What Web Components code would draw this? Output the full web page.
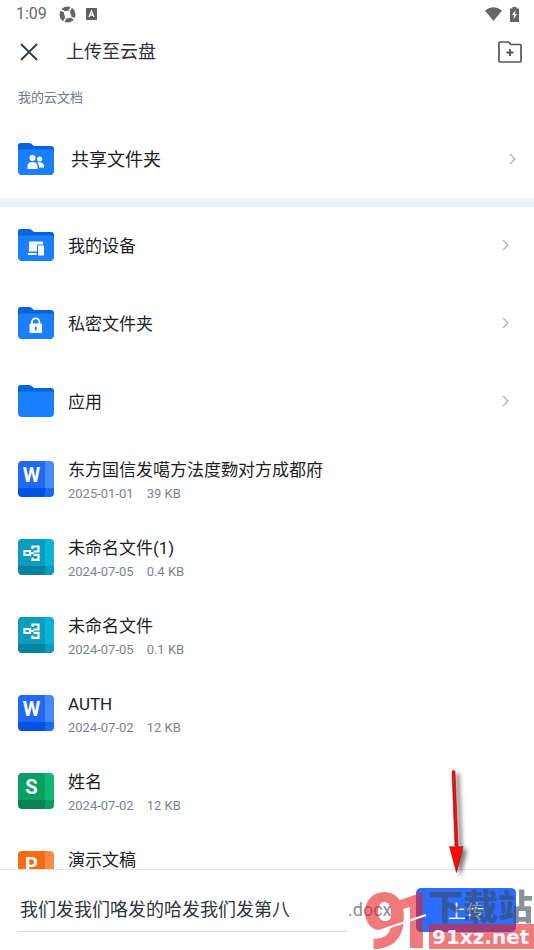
<!DOCTYPE html>
<html lang="zh-CN">
<head>
<meta charset="utf-8">
<meta name="viewport" content="width=device-width, initial-scale=1">
<title>上传至云盘</title>
<style>
html, body { margin: 0; height: 100%; }
body { background: #fff; color: #1c1e22; font-family: Roboto, "Noto Sans CJK SC", sans-serif; }
</style>
</head>
<body>
<upload-screen>
  <status-bar slot="top">1:09</status-bar>
  <title-bar slot="top">上传至云盘</title-bar>
  <section-label>我的云文档</section-label>
  <folder-row emblem="people" featured>共享文件夹</folder-row>
  <section-divider></section-divider>
  <folder-row emblem="devices">我的设备</folder-row>
  <folder-row emblem="lock">私密文件夹</folder-row>
  <folder-row>应用</folder-row>
  <file-row kind="word" date="2025-01-01" size="39 KB">东方国信发噶方法度覅对方成都府</file-row>
  <file-row kind="mind" date="2024-07-05" size="0.4 KB">未命名文件(1)</file-row>
  <file-row kind="mind" date="2024-07-05" size="0.1 KB">未命名文件</file-row>
  <file-row kind="word" date="2024-07-02" size="12 KB">AUTH</file-row>
  <file-row kind="sheet" date="2024-07-02" size="12 KB">姓名</file-row>
  <file-row kind="slide" date="2024-07-02" size="10 KB">演示文稿</file-row>
  <upload-bar slot="bottom" value="我们发我们咯发的哈发我们发第八" ext=".docx">上传
    <site-mark slot="mark"></site-mark>
    <pointer-arrow slot="mark"></pointer-arrow>
  </upload-bar>
</upload-screen>

<script>
const RESET = `
*, *::before, *::after { box-sizing: border-box; }
button { margin: 0; padding: 0; border: 0; background: none; color: inherit; font: inherit; text-align: left; cursor: pointer; }
svg { display: block; flex: none; }`;

function define(name, render) {
  customElements.define(name, class extends HTMLElement {
    constructor() {
      super();
      this.attachShadow({ mode: "open" });
    }
    connectedCallback() {
      const t = document.createElement("template");
      t.innerHTML = `<style>${RESET}</style>` + render(this);
      this.shadowRoot.replaceChildren(t.content.cloneNode(true));
    }
  });
}

define("upload-screen", () => `
<style>
:host { display: flex; flex-direction: column; height: 100vh; overflow: hidden; }
main { flex: 1; min-height: 0; overflow: hidden; }
</style>
<slot name="top"></slot>
<main><slot></slot></main>
<slot name="bottom"></slot>`);

define("status-bar", () => `
<style>
:host { display: flex; align-items: center; height: 28px; padding: 0 15px 0 16px; color: #6a6a6a; font-size: 16px; line-height: 28px; }
.disc { margin-left: 12px; }
.key { margin-left: 10px; }
.wifi { margin-left: auto; }
.battery { margin-left: 8px; }
</style>
<span><slot></slot></span>
<svg class="disc" width="17" height="17" viewBox="0 0 17 17" aria-hidden="true">
  <circle cx="8.500" cy="8.500" r="8" fill="#646464"/>
  <path d="M4.500 5.500 10.500 4.300 12.800 11.500 6.500 12.800z" fill="#fff"/>
  <path d="M5 5.300 1.500 4M10.500 4.500 12.500 1M12.500 11.500 16 13M6.500 12.500 4.500 16" stroke="#fff" stroke-width="1.600"/>
</svg>
<svg class="key" width="12" height="12" viewBox="0 0 12 12" aria-hidden="true">
  <rect width="11" height="12" rx="1" fill="#5f5f5f"/>
  <path d="M3 9 5.500 3 8 9M4 7h3" fill="none" stroke="#fff" stroke-width="1.300"/>
</svg>
<svg class="wifi" width="17" height="14" viewBox="0 0 17 14" aria-hidden="true"><path d="M0 3.500Q8.500-3 17 3.500L8.500 14z" fill="#666"/></svg>
<svg class="battery" width="9" height="15" viewBox="0 0 9 15" aria-hidden="true">
  <path d="M2.500 0h4v1.500H9V15H0V1.500h2.500z" fill="#636363"/>
  <path d="M5.500 3 2 8h2L3.500 12.500 7 7H5z" fill="#fff"/>
</svg>`);

define("title-bar", () => `
<style>
:host { display: flex; align-items: center; height: 47px; padding: 0 12px 0 20px; }
h1 { flex: 1; margin: 0 0 0 28px; font-size: 18px; font-weight: 400; line-height: 28px; color: #2c313b; }
</style>
<button type="button" aria-label="关闭"><svg width="18" height="18" viewBox="0 0 18 18"><path d="M1 1 17 17M17 1 1 17" stroke="#343843" stroke-width="1.800"/></svg></button>
<h1><slot></slot></h1>
<button type="button" aria-label="新建文件夹"><svg width="24" height="22" viewBox="0 0 24 22" fill="none" stroke="#555">
  <path d="M2 1H10.500L13 3.500H22Q23 3.500 23 4.500V20Q23 21 22 21H2Q1 21 1 20V2Q1 1 2 1z" stroke-width="1.700"/>
  <path d="M12 8v7M8.500 11.500h7" stroke-width="1.800"/></svg></button>`);

define("section-label", () => `
<style>:host { display: block; padding: 0 18px; font-size: 13px; line-height: 45px; color: #717887; }</style>
<slot></slot>`);

define("section-divider", () => `
<style>:host { display: block; height: 9px; background: #f1f2f4; }</style>`);

const EMBLEMS = {
  people: `<g fill="#fff"><circle cx="14.500" cy="15" r="3"/><path d="M9.500 26v-2.500Q9.500 19 14.500 19T19.500 23.500V26z"/><circle cx="21.700" cy="16" r="2.600"/><path d="M19 19.500Q26 18.500 26 23.500V24.500h-5V23Q21 21 19 19.500z"/></g>`,
  devices: `<path d="M11 12.500h14v3h-6v7h-8z" fill="#fff"/><path d="M10 24h8.500v2H10zM20 16.500h6v10h-6z" fill="#fff"/>`,
  lock: `<path d="M14 17v-2a3.700 3.700 0 0 1 7.400 0v2" fill="none" stroke="#fff" stroke-width="1.800"/><rect x="11.500" y="16.500" width="12.500" height="9.500" rx="1" fill="#fff"/><path d="M17.700 19.500v4" stroke="#1a80ff" stroke-width="1.800"/>`
};

define("folder-row", el => `
<style>
:host { display: block; font-size: 17px; }
:host([featured]) { font-size: 18px; }
button { display: flex; align-items: center; width: 100%; height: 78px; padding: 0 25px 2px 18px; }
span { flex: 1; margin-left: 14px; padding-top: 2px; line-height: 28px; }
:host([featured]) button { padding: 0 18px; }
:host([featured]) span { margin-left: 17px; }
</style>
<button type="button">
<svg width="36" height="32" viewBox="0 0 36 32" aria-hidden="true">
  <path d="M2.500 0H11.500Q13 0 14.500 1.700L16 3H33Q36 3 36 6V14H0V2.500Q0 0 2.500 0z" fill="#0465da"/>
  <path d="M0 9Q0 6.500 3 6.500H33Q36 6.500 36 9V28Q36 32 32 32H4Q0 32 0 28z" fill="#1a80ff"/>
  ${EMBLEMS[el.getAttribute("emblem")] ? `<g>${EMBLEMS[el.getAttribute("emblem")]}</g>` : ""}
</svg>
<span><slot></slot></span>
<svg width="7" height="12" viewBox="0 0 7 12" aria-hidden="true"><path d="M1 1 6 6 1 11" fill="none" stroke="#b4b4b4" stroke-width="1.400"/></svg>
</button>`);

const KINDS = {
  word: { main: "#2169f5", side: "#458aff", base: "#0252e2", corner: "#1b68f2", letter: "W" },
  sheet: { main: "#0b9e62", side: "#0bb971", base: "#078451", corner: "#0b9e62", letter: "S" },
  slide: { main: "#f76b14", side: "#ff8b45", base: "#e05502", corner: "#f76b14", letter: "P" },
  mind: { main: "#0a9dbd", side: "#0bb3d7", base: "#07839f", corner: "#0a9dbd" }
};

define("file-row", el => {
  const k = KINDS[el.getAttribute("kind")];
  const glyph = k.letter
    ? `<b>${k.letter}</b>`
    : `<svg class="tree" width="36" height="36" viewBox="0 0 36 36"><path d="M6.500 12h5.500v4H6.500zM12 14h3.500M14.500 10V7.500H20.500V12.500H15.500M15.500 15.800H20.500V20.800H14.500V18.500" fill="none" stroke="#fff" stroke-width="2.200"/></svg>`;
  return `
<style>
:host { display: block; }
button { display: flex; align-items: center; width: 100%; height: 78px; padding: 0 18px 2px; }
.icon { display: grid; flex: none; width: 36px; height: 36px; border-radius: 4px; overflow: hidden; }
.icon > * { grid-area: 1 / 1; }
b { width: 27px; color: #fff; font: 700 20px/28px Roboto, sans-serif; text-align: center; }
.text { display: flex; flex-direction: column; margin-left: 14px; padding-top: 4px; }
.name { font-size: 17px; line-height: 24px; }
.meta { display: flex; gap: 13px; font-size: 13px; line-height: 23px; color: #7b8393; }
</style>
<button type="button">
<span class="icon">
  <svg width="36" height="36" viewBox="0 0 36 36" aria-hidden="true">
    <path d="M0 0h27v27H0z" fill="${k.main}"/><path d="M27 0h9v30h-9z" fill="${k.side}"/>
    <path d="M0 27h28v9H0z" fill="${k.base}"/><path d="M27 36V31Q27 27 31 27H36V36z" fill="${k.corner}"/>
  </svg>
  ${glyph}
</span>
<span class="text">
  <span class="name"><slot></slot></span>
  <span class="meta"><span>${el.getAttribute("date")}</span><span>${el.getAttribute("size")}</span></span>
</span>
</button>`;
});

define("upload-bar", el => `
<style>
:host { display: block; position: relative; border-top: 1px solid #e2e3e5; background: #fff; font-size: 18px; }
form { display: flex; align-items: center; padding: 18px; }
label { flex: 1; min-width: 0; }
input { display: block; width: 100%; height: 44px; padding: 0 2px 3px; border: 0; border-bottom: 1px solid #d9dadd; border-radius: 0; outline: 0; background: none; font: inherit; color: #30343c; }
output { flex: none; width: 68px; line-height: 44px; color: #858b98; }
.go { flex: none; width: 100px; height: 44px; border-radius: 5px; background: #2a6dff; color: #fff; text-align: center; }
</style>
<form onsubmit="return false">
  <label><input type="text" aria-label="文件名" value="${el.getAttribute("value")}"></label>
  <output>${el.getAttribute("ext")}</output>
  <button class="go" type="submit"><slot></slot></button>
</form>
<slot name="mark"></slot>`);

define("site-mark", () => `
<style>
:host { position: absolute; right: 0; bottom: 0; pointer-events: none; }
</style>
<svg width="172" height="64" viewBox="0 0 172 64">
  <g opacity="0.6">
    <text x="0 29" y="62" font-family="Roboto, sans-serif" font-weight="900" font-size="78" fill="#e81f25">91</text>
    <path d="M67 38H172V63H67z" fill="#e81f25"/>
    <text x="66" y="34" font-family="Noto Sans CJK SC, sans-serif" font-weight="900" font-size="35" fill="#3c4b5a">下载站</text>
  </g>
  <path d="M8 48 64 29" stroke="#fff" stroke-width="2"/>
  <text x="70" y="58" font-family="DejaVu Sans, sans-serif" font-weight="700" font-size="20" fill="#f4f4fb">91xz.net</text>
</svg>`);

define("pointer-arrow", () => `
<style>
:host { position: absolute; right: 60px; bottom: 70px; pointer-events: none; }
svg { filter: drop-shadow(4px 3px 2px #0008); }
</style>
<svg width="30" height="112" viewBox="0 0 30 112" aria-hidden="true">
  <path d="M8 3.500Q9.500 1 11 3.500L14 79 19 78.500 12.500 104.500 5.500 78.500 11 79z" fill="#fb0a0a" stroke="#8a1010" stroke-width="0.600"/>
</svg>`);
</script>
</body>
</html>
